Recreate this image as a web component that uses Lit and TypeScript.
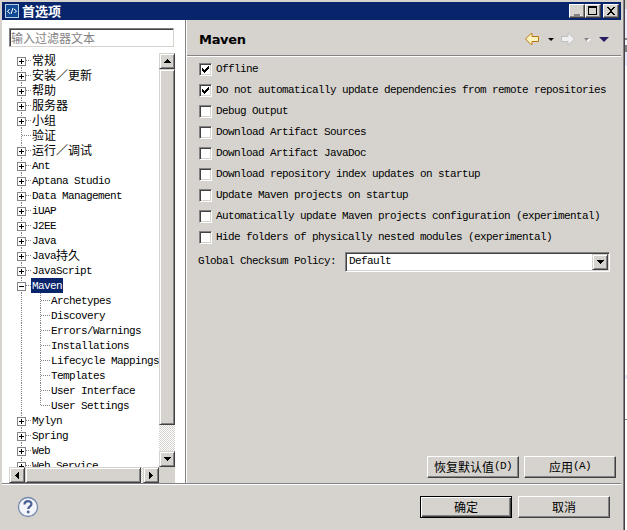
import { LitElement, html, css, svg } from "lit";
import { customElement, property } from "lit/decorators.js";

const CJK = /([\u2e80-\u9fff\uff00-\uffef]+)/;
const runs = (text: string) =>
  text.split(CJK).filter(Boolean).map((t) =>
    html`<span class=${CJK.test(t) ? "han" : "latin"}>${t}</span>`);

const type = css`
  * { box-sizing: border-box; }
  .han { font: 12px/15px "Noto Sans CJK SC", sans-serif; letter-spacing: 0; }
  .latin { font: 11px/15px "Liberation Mono", monospace; letter-spacing: -0.6px; }
  .han, .latin { white-space: pre; }
  svg { display: block; flex: none; }
`;

const bevel = css`
  .raised {
    background: #d6d3ce;
    border: 1px solid;
    border-color: #d6d3ce #424142 #424142 #d6d3ce;
    box-shadow: inset 1px 1px #fff, inset -1px -1px #848284;
  }
`;

const arrow = (dir: string) => {
  const d: Record<string, string> = {
    up: "M3 0h1v1h1v1h1v1h1v1H0V3h1V2h1V1h1z",
    down: "M0 0h7v1H6v1H5v1H4v1H3V3H2V2H1V1H0z",
    left: "M3 0h1v7H3V6H2V5H1V4H0V3h1V2h1V1h1z",
    right: "M0 0h1v1h1v1h1v1h1v1H3v1H2v1H1v1H0z",
  };
  const wide = dir === "up" || dir === "down";
  return html`<svg width=${wide ? 7 : 4} height=${wide ? 4 : 7} shape-rendering="crispEdges"><path d=${d[dir]} fill="#000" /></svg>`;
};

@customElement("push-button")
class PushButton extends LitElement {
  @property() label = "";
  @property({ type: Boolean, reflect: true }) primary = false;
  static styles = [type, css`
    :host { display: block; width: 92px; height: 22px; }
    .face {
      height: 100%; display: flex; align-items: center; justify-content: center; padding-bottom: 2px;
      border: 1px solid; border-color: #fff #424142 #424142 #fff;
      box-shadow: inset -1px -1px #848284;
    }
    :host([primary]) .face { border-color: #000; box-shadow: inset 1px 1px #fff, inset -1px -1px #424142, inset -2px -2px #848284; }
  `];
  render() { return html`<div class="face">${runs(this.label)}</div>`; }
}

@customElement("check-row")
class CheckRow extends LitElement {
  @property() label = "";
  @property({ type: Boolean }) checked = false;
  static styles = [type, css`
    :host { display: flex; align-items: center; height: 21px; gap: 4px; padding-left: 1px; }
    .box {
      width: 13px; height: 13px; background: #fff; border: 1px solid;
      border-color: #848284 #fff #fff #848284;
      box-shadow: inset 1px 1px #424142, inset -1px -1px #d6d3ce;
    }
    .box svg { margin: 2px; }
  `];
  render() {
    return html`<div class="box">${this.checked
      ? html`<svg width="7" height="7" shape-rendering="crispEdges"><path d="M0 2h1v1h1v1h1V3h1V2h1V1h1V0h1v3H6v1H5v1H4v1H3v1H2V6H1V5H0z" /></svg>` : ""}</div>${runs(this.label)}`;
  }
}

type Row = { label: string; kind: "plus" | "minus" | "leaf" | "child"; last?: boolean };
const tops = (...l: string[]): Row[] => l.map((label) => ({ label, kind: "plus" }));
const kids = ["Archetypes", "Discovery", "Errors/Warnings", "Installations", "Lifecycle Mappings", "Templates", "User Interface", "User Settings"];
const ROWS: Row[] = [
  ...tops("常规", "安装／更新", "帮助", "服务器", "小组"),
  { label: "验证", kind: "leaf" },
  ...tops("运行／调试", "Ant", "Aptana Studio", "Data Management", "iUAP", "J2EE", "Java", "Java持久", "JavaScript"),
  { label: "Maven", kind: "minus" },
  ...kids.map((label, i): Row => ({ label, kind: "child", last: i === kids.length - 1 })),
  ...tops("Mylyn", "Spring", "Web", "Web Service"),
];

@customElement("pref-tree")
class PrefTree extends LitElement {
  static styles = [type, bevel, css`
    :host { display: grid; grid-template: 414px 16px / 150px 16px; }
    .rows { overflow: hidden; }
    .row { display: flex; height: 15px; }
    .label { padding: 0 1px; height: 15px; white-space: nowrap; display: flex; }
    .label .latin { line-height: 17px; }
    .label .han { line-height: 14px; }
    .selected { background: #08246b; color: #fff; }
    .vbar { display: flex; flex-direction: column; }
    .hbar { display: flex; }
    .track { flex: 1; background: repeating-conic-gradient(#fff 0 25%, #d6d3ce 0 50%) 0 0 / 2px 2px; }
    .btn { width: 16px; height: 16px; flex: none; display: flex; align-items: center; justify-content: center; }
    .vthumb { height: 356px; }
    .hthumb { width: 116px; }
    .corner { background: #d6d3ce; }
  `];
  private guide(r: Row, first: boolean) {
    const dot = (d: string) => svg`<path d=${d} stroke="#848284" stroke-dasharray="1 1" fill="none" />`;
    const child = r.kind === "child";
    const box = r.kind === "plus" || r.kind === "minus";
    return html`<svg width=${child ? 41 : 22} height="15" shape-rendering="crispEdges">
      ${dot(first ? "M12.5 8V15" : "M12.5 0V15")}
      ${child ? svg`${dot(r.last ? "M31.5 0V8" : "M31.5 0V15")}${dot("M32 7.5H41")}` : dot("M13 7.5H22")}
      ${box ? svg`<rect x="8.5" y="4.5" width="8" height="8" fill="#fff" stroke="#848284" /><path d=${r.kind === "plus" ? "M10 8.5h5M12.5 6v5" : "M10 8.5h5"} stroke="#000" />` : ""}
    </svg>`;
  }
  render() {
    return html`
      <div class="rows">${ROWS.map((r, i) => html`<div class="row">${this.guide(r, i === 0)}<div class="label ${r.kind === "minus" ? "selected" : ""}">${runs(r.label)}</div></div>`)}</div>
      <div class="vbar"><div class="btn raised">${arrow("up")}</div><div class="vthumb raised"></div><div class="track"></div><div class="btn raised">${arrow("down")}</div></div>
      <div class="hbar"><div class="btn raised">${arrow("left")}</div><div class="hthumb raised"></div><div class="track"></div><div class="btn raised">${arrow("right")}</div></div>
      <div class="corner"></div>`;
  }
}

const CHECKS: [string, boolean][] = [
  ["Offline", true],
  ["Do not automatically update dependencies from remote repositories", true],
  ["Debug Output", false],
  ["Download Artifact Sources", false],
  ["Download Artifact JavaDoc", false],
  ["Download repository index updates on startup", false],
  ["Update Maven projects on startup", false],
  ["Automatically update Maven projects configuration (experimental)", false],
  ["Hide folders of physically nested modules (experimental)", false],
];

@customElement("app-root")
class AppRoot extends LitElement {
  static styles = [type, bevel, css`
    :host { display: flex; width: 627px; height: 530px; overflow: hidden; background: #d6d3ce; color: #000; }
    .window { width: 625px; height: 530px; padding: 2px 3px 0 2px; border-right: 1px solid #424142; box-shadow: inset -1px 0 #848284; display: flex; flex-direction: column; }
    .behind { width: 2px; background: linear-gradient(#d6d3ce 0 9px, #efebff 9px 38px, #848284 38px 40px, #f4f2ff 40px 45px, #848284 45px 52px, #e7e7ff 52px 66px, #fff 66px 375px, #e7e7f7 375px 379px, #fff 379px 419px, #848284 419px 420px, #fff 420px); }
    .title { height: 18px; background: #08246b; display: flex; align-items: center; padding: 0 2px 0 3px; }
    .title h1 { margin: 0 auto 0 3px; color: #fff; font: bold 13px/18px "Noto Sans CJK SC", sans-serif; }
    .cap { width: 16px; height: 14px; display: grid; place-items: center; border-color: #fff #424142 #424142 #fff; box-shadow: inset -1px -1px #848284; }
    .close { margin-left: 2px; }
    .main { height: 463px; display: flex; }
    .side { width: 183px; background: #fff; padding: 8px 0 0 7px; }
    .filter { width: 165px; height: 19px; margin-bottom: 6px; border: 1px solid; border-color: #848284 #d6d3ce #d6d3ce #848284; box-shadow: inset 1px 1px #424142; padding: 1px; color: #848284; display: flex; align-items: center; }
    .sash { width: 2px; background: linear-gradient(90deg, #848284 50%, #fff 50%); }
    .page { flex: 1; }
    .head { height: 37px; border-bottom: 1px solid #fff; box-shadow: inset 0 -1px #848284; display: flex; align-items: center; padding: 0 11px 0 12px; }
    .head svg { margin-top: 2px; }
    .head h2 { margin: 3px auto 0 0; font: bold 13px/18px "DejaVu Sans", sans-serif; letter-spacing: -0.3px; }
    .body { height: 425px; padding: 2px 5px 4px 11px; display: flex; flex-direction: column; }
    .policy { display: flex; align-items: center; gap: 9px; padding-top: 3px; height: 24px; }
    .combo { width: 265px; height: 20px; background: #fff; border: 1px solid; border-color: #848284 #fff #fff #848284; box-shadow: inset 1px 1px #424142, inset -1px -1px #d6d3ce; display: flex; align-items: center; justify-content: space-between; padding: 1px 1px 1px 3px; }
    .drop { width: 16px; height: 16px; display: grid; place-items: center; }
    .actions { margin-top: auto; display: flex; justify-content: flex-end; gap: 5px; }
    .rule { height: 2px; background: linear-gradient(#848284 50%, #fff 50%); }
    .foot { flex: 1; display: flex; align-items: flex-start; gap: 6px; padding: 11px 11px 0 15px; }
    .help { margin-right: auto; }
  `];
  render() {
    return html`
      <div class="window">
        <div class="title">
          <svg width="14" height="14"><rect x=".5" y=".5" width="13" height="13" fill="#104a94" stroke="#b5cfe7" /><path d="M4.5 5L2.5 7.5 5 9.5M9 5l2.5 2L9.5 9M8 4L6 10" stroke="#fff" fill="none" /></svg>
          <h1>首选项</h1>
          <div class="cap raised"><svg width="12" height="12" shape-rendering="crispEdges"><path d="M4 10h6v1H4z" fill="#fff" /><path d="M3 9h6v2H3z" fill="#848284" /></svg></div>
          <div class="cap raised"><svg width="12" height="12" shape-rendering="crispEdges"><path d="M1 1h9v9H1zM2 3v6h7V3z" fill-rule="evenodd" /></svg></div>
          <div class="cap raised close"><svg width="12" height="12" shape-rendering="crispEdges"><path d="M2 2h2v1h1v1h2V3h1V2h2v1H9v1H8v1H7v2h1v1h1v1h1v1H8V9H7V8H5v1H4v1H2V9h1V8h1V7h1V5H4V4H3V3H2z" /></svg></div>
        </div>
        <div class="main">
          <div class="side">
            <div class="filter">${runs("输入过滤器文本")}</div>
            <pref-tree></pref-tree>
          </div>
          <div class="sash"></div>
          <div class="page">
            <div class="head">
              <h2>Maven</h2>
              <svg width="86" height="16">
                <path d="M1.5 8L7 2.5h1v3h6.5v5H8v3H7z" fill="#fff3bd" stroke="#bd7510" />
                <path d="M24 7h6l-3 3z" />
                <path d="M50.500 8L45 2.500h-1v3h-6.500v5H44v3h1z" fill="#efefef" stroke="#bdbebd" />
                <path d="M61 8h6l-3 3z" fill="#fff" /><path d="M60 7h5l-2.500 3z" fill="#848284" />
                <path d="M75 6h10l-5 5z" fill="#291c63" />
              </svg>
            </div>
            <div class="body">
              ${CHECKS.map(([l, c]) => html`<check-row .label=${l} .checked=${c}></check-row>`)}
              <div class="policy">${runs("Global Checksum Policy:")}
                <div class="combo">${runs("Default")}<div class="drop raised">${arrow("down")}</div></div>
              </div>
              <div class="actions"><push-button label="恢复默认值(D)"></push-button><push-button label="应用(A)"></push-button></div>
            </div>
          </div>
        </div>
        <div class="rule"></div>
        <div class="foot">
          <svg class="help" width="22" height="22"><circle cx="11" cy="11" r="9.500" fill="#f4f5fa" stroke="#7388ad" stroke-width="1.300" /><path d="M7.500 8.500C7.500 4 14.500 4 14.500 8c0 2.500-3.300 2.500-3.300 5" fill="none" stroke="#4a6394" stroke-width="2.200" /><circle cx="11.200" cy="16" r="1.400" fill="#4a6394" /></svg>
          <push-button primary label="确定"></push-button>
          <push-button label="取消"></push-button>
        </div>
      </div>
      <div class="behind"></div>`;
  }
}
